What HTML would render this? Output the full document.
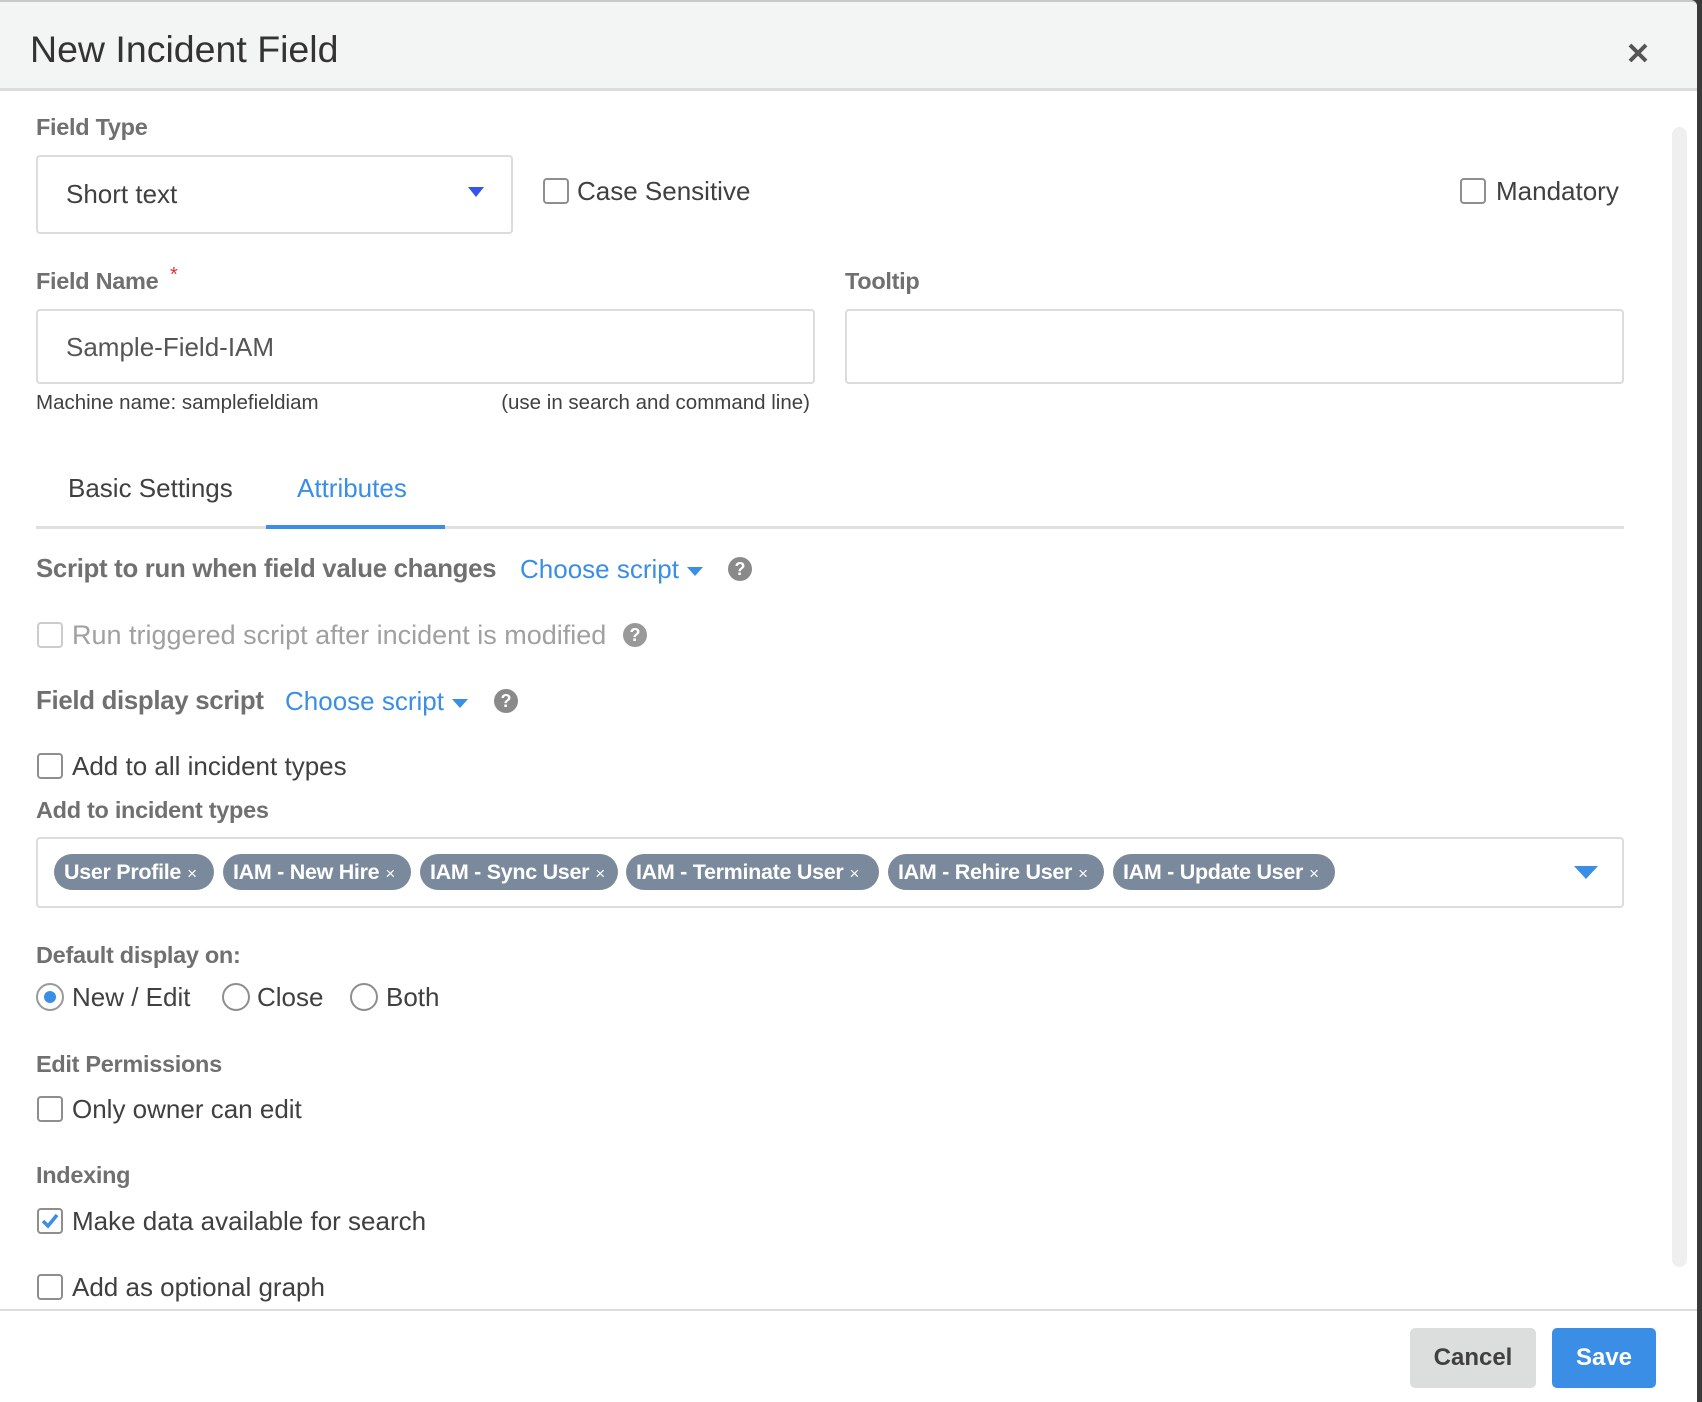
<!DOCTYPE html>
<html><head><meta charset="utf-8"><style>
*{box-sizing:border-box;margin:0;padding:0}
html,body{width:1702px;height:1402px;overflow:hidden;background:#3a3a3a;font-family:"Liberation Sans",sans-serif;color:#404040}
#m{position:absolute;left:0;top:0;width:1697px;height:1402px;background:#fff;border-top:2px solid #c9c9c9;border-top-right-radius:6px;overflow:hidden}
.a{position:absolute;white-space:nowrap}
.t{height:32px;line-height:32px;font-size:26px;margin-top:-16px}
.lb{height:30px;line-height:30px;font-size:23.5px;margin-top:-15px;color:#707070;font-weight:bold;letter-spacing:-0.3px}
.cb{position:absolute;width:26px;height:26px;border:2px solid #8e8e8e;border-radius:4px;margin-top:-13px;background:#fff}
.rd{position:absolute;width:28px;height:28px;border:2px solid #8e8e8e;border-radius:50%;margin-top:-14px;background:#fff}
.box{position:absolute;border:2px solid #dcdcdc;border-radius:4px;background:#fff}
.tag{position:absolute;top:852px;height:36px;line-height:36px;background:#7a8a9c;color:#fff;border-radius:18px;font-size:21.5px;font-weight:bold;padding-left:10px;white-space:nowrap;overflow:hidden;letter-spacing:-0.3px}
.tag span{font-size:17px;font-weight:normal;margin-left:6px}
.blue{color:#3a8ee6}
.q{position:absolute;width:24px;height:24px;border-radius:50%;background:#8a8a8a;color:#fff;font-size:18px;font-weight:bold;text-align:center;line-height:24px;margin-top:-12px}
.car{display:inline-block;width:0;height:0;border-left:8px solid transparent;border-right:8px solid transparent;border-top:9px solid #3a8ee6;vertical-align:middle;margin-left:8px}
</style></head><body><div id="m">
<div class="a" style="left:0;top:0;width:1697px;height:89px;background:#f3f4f4;border-bottom:3px solid #dcdcdc"></div>
<div class="a" style="left:30px;top:47px;height:44px;line-height:44px;margin-top:-22px;font-size:37.5px;color:#333">New Incident Field</div>
<svg class="a" style="left:1627px;top:40px" width="22" height="22" viewBox="0 0 22 22"><path d="M3 3L19 19M19 3L3 19" stroke="#555" stroke-width="4"/></svg>
<div class="a" style="left:1672px;top:125px;width:15px;height:1140px;background:#efefef;border-radius:8px"></div>

<div class="a lb" style="left:36px;top:125px">Field Type</div>
<div class="box" style="left:36px;top:153px;width:477px;height:79px"></div>
<div class="a t" style="left:66px;top:192px">Short text</div>
<div class="a" style="left:468px;top:185px;width:0;height:0;border-left:8px solid transparent;border-right:8px solid transparent;border-top:10px solid #3355ee"></div>
<div class="cb" style="left:543px;top:189px"></div>
<div class="a t" style="left:577px;top:189px">Case Sensitive</div>
<div class="cb" style="left:1460px;top:189px"></div>
<div class="a t" style="left:1496px;top:189px">Mandatory</div>

<div class="a lb" style="left:36px;top:279px">Field Name</div>
<div class="a" style="left:170px;top:262px;color:#d33;font-size:20px">*</div>
<div class="box" style="left:36px;top:307px;width:779px;height:75px"></div>
<div class="a t" style="left:66px;top:345px;color:#555">Sample-Field-IAM</div>
<div class="a lb" style="left:845px;top:279px">Tooltip</div>
<div class="box" style="left:845px;top:307px;width:779px;height:75px"></div>
<div class="a t" style="left:36px;top:401px;font-size:20.5px">Machine name: samplefieldiam</div>
<div class="a t" style="right:887px;top:401px;font-size:20.5px">(use in search and command line)</div>

<div class="a t" style="left:68px;top:486px">Basic Settings</div>
<div class="a t blue" style="left:297px;top:486px">Attributes</div>
<div class="a" style="left:36px;top:524px;width:1588px;height:3px;background:#e0e0e0"></div>
<div class="a" style="left:266px;top:523px;width:179px;height:4px;background:#3a8ee6"></div>

<div class="a lb" style="left:36px;top:567px;font-size:25.8px">Script to run when field value changes</div>
<div class="a t blue" style="left:520px;top:567px">Choose script<span class="car"></span></div>
<div class="q" style="left:728px;top:567px">?</div>

<div class="cb" style="left:37px;top:633px;border-color:#ccc"></div>
<div class="a t" style="left:72px;top:633px;font-size:27px;color:#a0a0a0">Run triggered script after incident is modified</div>
<div class="q" style="left:623px;top:633px;background:#999">?</div>

<div class="a lb" style="left:36px;top:699px;font-size:25.8px">Field display script</div>
<div class="a t blue" style="left:285px;top:699px">Choose script<span class="car"></span></div>
<div class="q" style="left:494px;top:699px">?</div>

<div class="cb" style="left:37px;top:764px"></div>
<div class="a t" style="left:72px;top:764px">Add to all incident types</div>
<div class="a lb" style="left:36px;top:808px">Add to incident types</div>
<div class="box" style="left:36px;top:835px;width:1588px;height:71px"></div>
<div class="tag" style="left:54px;width:160px">User Profile<span>×</span></div>
<div class="tag" style="left:223px;width:188px">IAM - New Hire<span>×</span></div>
<div class="tag" style="left:420px;width:198px">IAM - Sync User<span>×</span></div>
<div class="tag" style="left:626px;width:253px">IAM - Terminate User<span>×</span></div>
<div class="tag" style="left:888px;width:216px">IAM - Rehire User<span>×</span></div>
<div class="tag" style="left:1113px;width:222px">IAM - Update User<span>×</span></div>
<div class="a" style="left:1574px;top:864px;width:0;height:0;border-left:12px solid transparent;border-right:12px solid transparent;border-top:13px solid #3a8ee6"></div>

<div class="a lb" style="left:36px;top:953px">Default display on:</div>
<div class="rd" style="left:36px;top:995px;border-color:#999"><div style="position:absolute;left:6px;top:6px;width:12px;height:12px;border-radius:50%;background:#3a8ee6"></div></div>
<div class="a t" style="left:72px;top:995px">New / Edit</div>
<div class="rd" style="left:222px;top:995px"></div>
<div class="a t" style="left:257px;top:995px">Close</div>
<div class="rd" style="left:350px;top:995px"></div>
<div class="a t" style="left:386px;top:995px">Both</div>

<div class="a lb" style="left:36px;top:1062px">Edit Permissions</div>
<div class="cb" style="left:37px;top:1107px"></div>
<div class="a t" style="left:72px;top:1107px">Only owner can edit</div>
<div class="a lb" style="left:36px;top:1173px">Indexing</div>
<div class="cb" style="left:37px;top:1219px"><svg style="position:absolute;left:1px;top:1px" width="20" height="20" viewBox="0 0 20 20"><path d="M3 10L8 15L17 4" stroke="#3a8ee6" stroke-width="3.5" fill="none"/></svg></div>
<div class="a t" style="left:72px;top:1219px">Make data available for search</div>
<div class="cb" style="left:37px;top:1285px"></div>
<div class="a t" style="left:72px;top:1285px">Add as optional graph</div>

<div class="a" style="left:0;top:1307px;width:1697px;height:95px;background:#fff;border-top:2px solid #dcdcdc"></div>
<div class="a" style="left:1410px;top:1326px;width:126px;height:60px;background:#dcdddd;border-radius:5px;line-height:60px;text-align:center;font-size:24px;font-weight:bold;color:#404040">Cancel</div>
<div class="a" style="left:1552px;top:1326px;width:104px;height:60px;background:#3a8ee6;border-radius:5px;line-height:60px;text-align:center;font-size:24px;font-weight:bold;color:#fff">Save</div>
</div></body></html>
